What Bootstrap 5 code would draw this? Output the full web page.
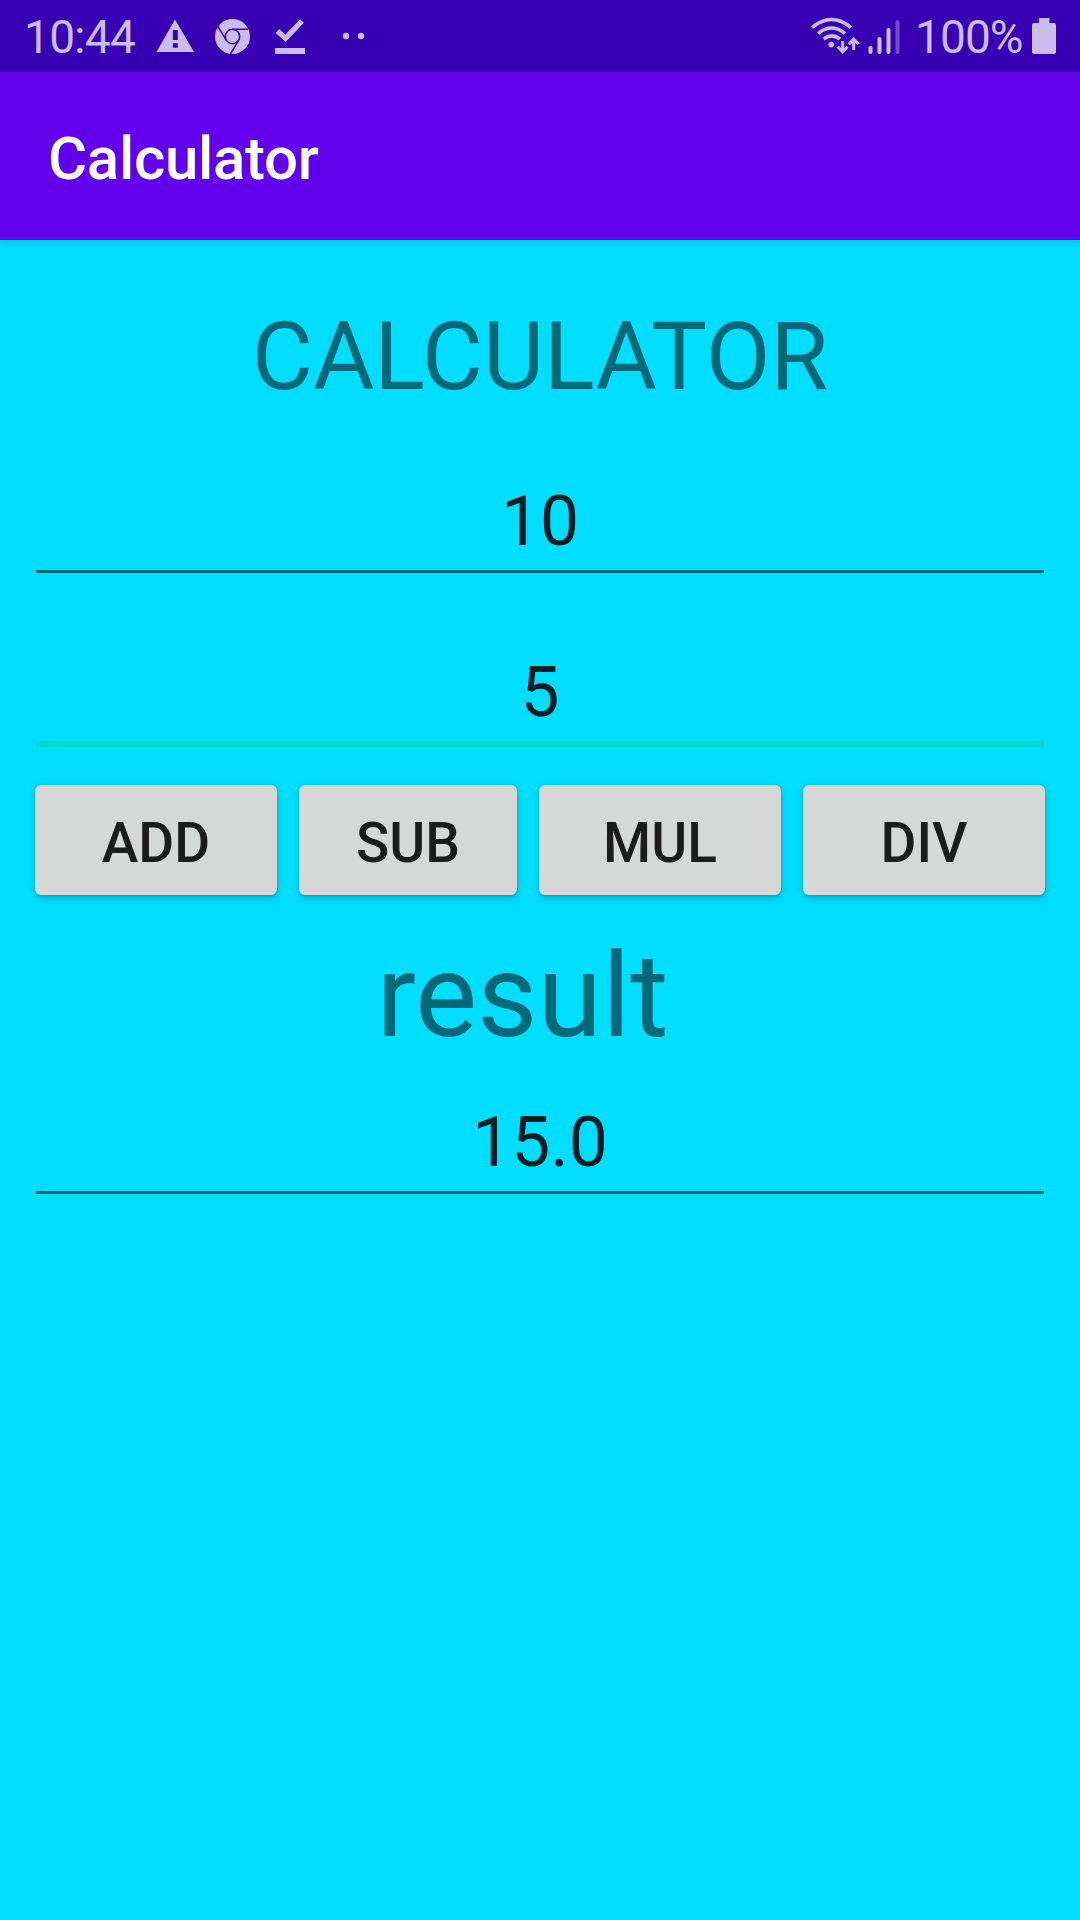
<!DOCTYPE html>
<html lang="en">
<head>
<meta charset="utf-8">
<meta name="viewport" content="width=device-width, initial-scale=1">
<title>Calculator</title>
<link href="https://cdn.jsdelivr.net/npm/bootstrap@5.3.0/dist/css/bootstrap.min.css" rel="stylesheet">
<style>
  body { font-family: Roboto, "Liberation Sans", sans-serif; background: #00ddff; height: 1920px; overflow: hidden; }
  .status-bar { height: 72px; background: #3700b3; color: #cbbcec; font-size: 46px; line-height: 72px; }
  .status-bar svg { display: block; flex: none; }
  .clock { width: 110px; margin-left: 24px; padding-top: 2px; letter-spacing: -.7px; white-space: nowrap; }
  .charge { margin-left: 12px; width: 108px; padding-top: 2px; letter-spacing: -.9px; white-space: nowrap; }
  .app-bar { height: 168px; padding: 5px 0 0 48px; background: #6200ee; box-shadow: 0 2px 10px rgba(0,0,0,.16); }
  .app-title { font-size: 60px; font-weight: 500; line-height: 1; letter-spacing: -.3px; }
  .headline { height: 232px; font-size: 94px; line-height: 235px; color: #006978; }
  .field { height: 101px; margin: 0 36px; padding: 0; border: 0; border-bottom: 3px solid #006978; border-radius: 0;
           font-size: 69.500px; line-height: 100px; color: #001f24; }
  .field-focus { height: 104px; margin-top: 70px; border-bottom: 6px solid #01dbcb; }
  .keys { margin: 38px 35px 0; gap: 22px; }
  .key { flex: 242 0 0; height: 110px; padding: 6px 0 0; border: 0; border-radius: 6px; background: #d6d7d7; color: #1c1c1c;
         font-size: 55px; font-weight: 500; line-height: 1; box-shadow: 0 3px 6px rgba(0,0,0,.22), 0 0 2px rgba(0,0,0,.2); }
  .key-narrow { flex-grow: 218; }
  .result-label { height: 198px; padding-right: 35px; font-size: 117px; line-height: 202px; color: #006978; }
</style>
</head>
<body>
<header class="position-relative">
  <div class="status-bar position-relative z-1 d-flex align-items-center justify-content-between">
    <div class="d-flex align-items-center">
      <span class="clock">10:44</span>
      <svg width="240" height="72" viewBox="134 0 240 72" fill="#cbbcec">
        <path fill-rule="evenodd" d="M175 19.500 194 52H156.500ZM172.800 30v10h5V30ZM172.800 43.300v4.500h5v-4.500Z"/>
        <circle cx="232.500" cy="36.500" r="17.500"/>
        <g fill="none" stroke="#3700b3" stroke-width="1.500">
          <circle cx="232.500" cy="36.500" r="7.200"/>
          <path d="M232.500 29.300H248M226.300 40.100 217.500 26M238.700 40.100 230.500 54"/>
        </g>
        <path d="M275 48h30v6h-30Z"/>
        <path d="M277.500 31 285.500 38.300 302 21" fill="none" stroke="#cbbcec" stroke-width="5.200"/>
        <circle cx="346" cy="36" r="3.200"/><circle cx="361" cy="36" r="3.200"/>
      </svg>
    </div>
    <div class="d-flex align-items-center">
      <svg width="95" height="72" viewBox="808 0 95 72" fill="none" stroke="#cbbcec">
        <g stroke-width="3.500">
          <path d="M812 27.500Q831.500 11.500 851 27.500M818 33.500Q831.500 22.500 845 33.500M823.500 39Q831.500 32.800 840 39"/>
        </g>
        <circle cx="831.300" cy="44.600" r="2.800" fill="#cbbcec" stroke="none"/>
        <g stroke-width="3"><path d="M842.700 41v10.500M837.800 46.800l4.900 5 4.900-5M853.700 50V39.500M848.800 44.200l4.900-5 4.900 5"/></g>
        <g stroke-width="4" stroke-linecap="round"><path d="M870.500 48v4M879.500 39v13M888.500 30v22"/><path d="M897.500 22v30" stroke="#7549cb"/></g>
      </svg>
      <span class="charge">100%</span>
      <svg width="57" height="72" viewBox="1023 0 57 72" fill="#cbbcec">
        <path d="M1039 18h10.500v5h4.500q2 0 2 2v27q0 2-2 2h-20q-2 0-2-2V25q0-2 2-2h5Z"/>
      </svg>
    </div>
  </div>
  <div class="app-bar d-flex align-items-center">
    <h1 class="app-title text-white mb-0">Calculator</h1>
  </div>
</header>
<main>
  <h2 class="headline text-center fw-normal mb-0">CALCULATOR</h2>
  <div class="field text-center">10</div>
  <div class="field field-focus text-center">5</div>
  <div class="keys d-flex">
    <button type="button" class="btn key">ADD</button>
    <button type="button" class="btn key key-narrow">SUB</button>
    <button type="button" class="btn key">MUL</button>
    <button type="button" class="btn key">DIV</button>
  </div>
  <div class="result-label text-center">result</div>
  <div class="field text-center">15.0</div>
</main>
<script src="https://cdn.jsdelivr.net/npm/bootstrap@5.3.0/dist/js/bootstrap.bundle.min.js"></script>
</body>
</html>
